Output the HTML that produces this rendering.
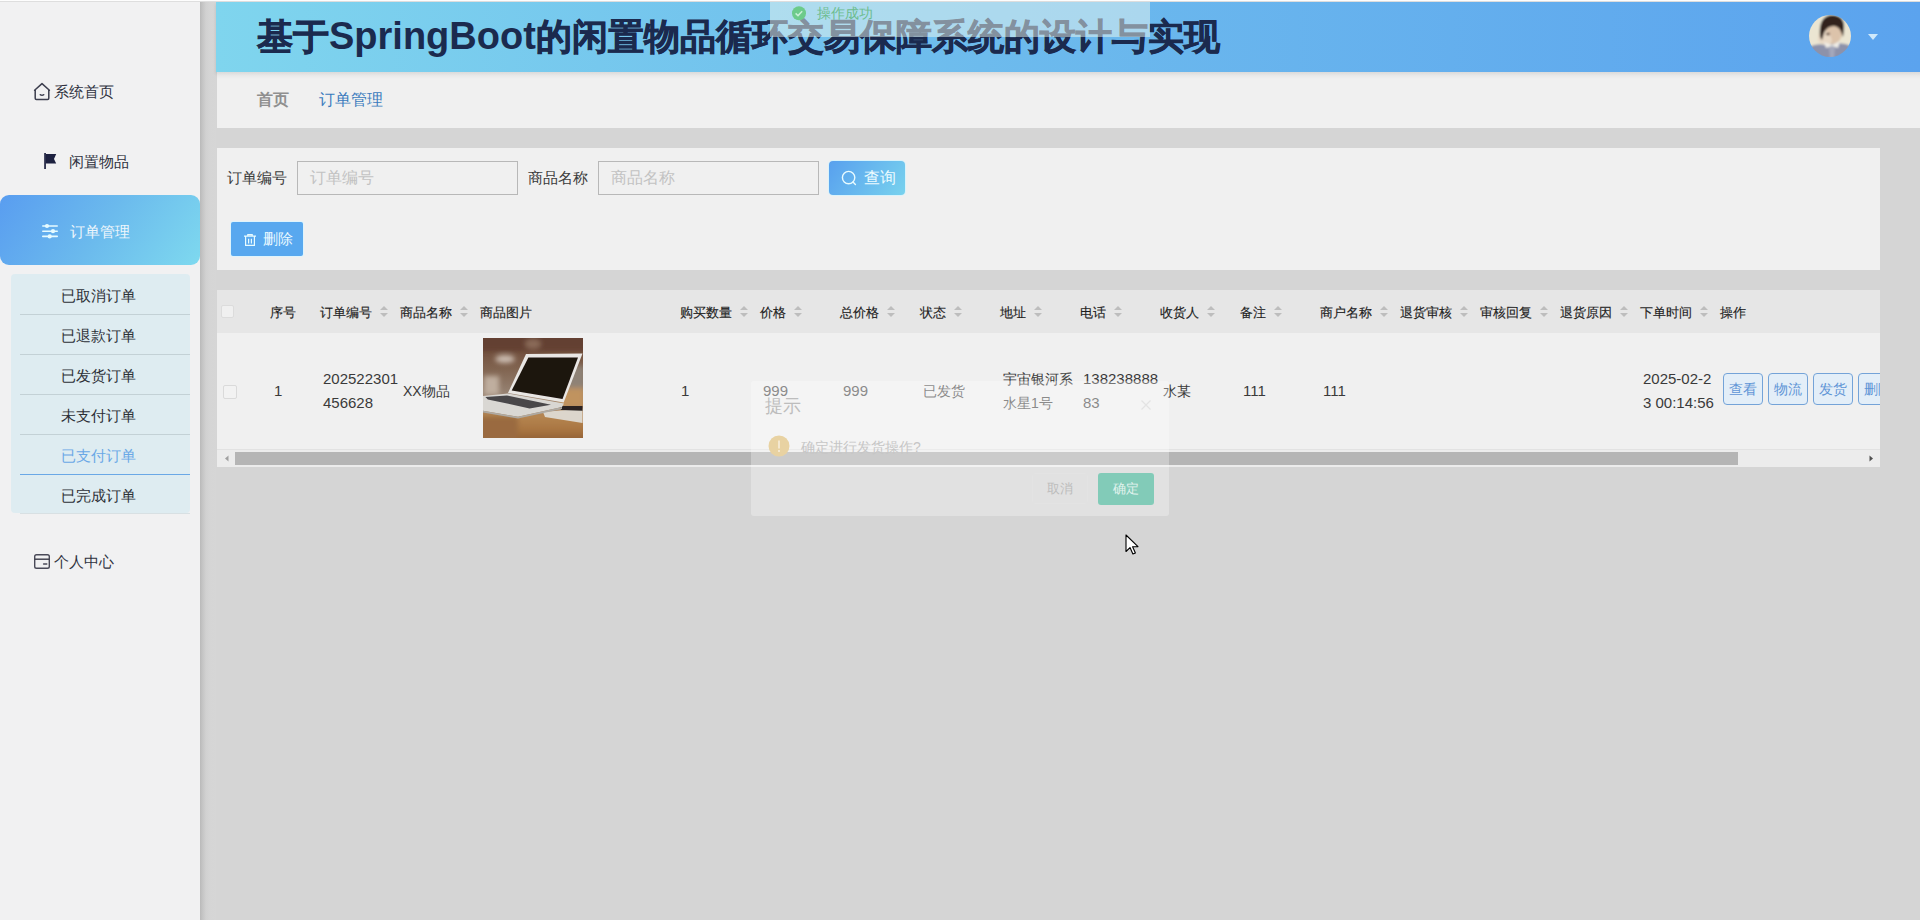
<!DOCTYPE html>
<html><head><meta charset="utf-8">
<style>
*{margin:0;padding:0;box-sizing:border-box}
html,body{width:1920px;height:920px;overflow:hidden}
body{position:relative;background:#d5d5d5;font-family:"Liberation Sans",sans-serif;color:#333}
.abs{position:absolute}
#topline{left:0;top:0;width:1920px;height:2px;background:linear-gradient(#fdfdfd 0,#fdfdfd 1px,#dedede 1px)}
#sidebar{left:0;top:2px;width:200px;height:918px;background:#f1f1f2}
#sbshadow{left:200px;top:2px;width:16px;height:918px;background:linear-gradient(90deg,#b9b9b9 0,#c3c3c3 2px,#d1d1d1 6px,#d5d5d5 10px,#d6d6d6)}
.mi{position:absolute;font-size:15px;color:#2f3140;line-height:20px;white-space:nowrap}
#active{left:0;top:195px;width:200px;height:70px;border-radius:9px;background:linear-gradient(125deg,#599df0 0%,#6bbaed 50%,#7ed9ef 100%)}
#sub{left:11px;top:274px;width:179px;height:239px;background:#deecf1;border-radius:4px}
.sep{position:absolute;left:20px;width:170px;height:1px;background:#c3d1d6}
.si{position:absolute;left:61px;font-size:15px;color:#2c2f36;line-height:20px}
#header{left:216px;top:2px;width:1704px;height:70px;background:linear-gradient(90deg,#7fd5ee 0%,#6dbbed 45%,#5ba3ee 100%);box-shadow:0 2px 3px rgba(0,0,0,.12)}
.tc{-webkit-text-stroke:0.7px #1b2a4e}
#title{left:257px;top:13.5px;font-size:36px;font-weight:bold;color:#1b2a4e;white-space:nowrap;line-height:44px}
#bread{left:217px;top:72px;width:1703px;height:56px;background:#f0f0f0}
#panel{left:217px;top:148px;width:1663px;height:122px;background:#f0f0f0}
#table{left:217px;top:290px;width:1663px;height:177px;background:#f0f0f0}
#thead{left:217px;top:290px;width:1663px;height:43px;background:#e6e6e6}
.th{position:absolute;top:303.5px;font-size:13px;font-weight:normal;-webkit-text-stroke:0.15px #1e1e1e;color:#1e1e1e;line-height:17px;white-space:nowrap}
.td{position:absolute;font-size:14px;color:#3a3a3a;line-height:24px;white-space:nowrap}
.sort{position:absolute;top:305px;width:10px;height:13px}
.btn{position:absolute;top:0;width:40px;height:32px;border:1px solid #74a3d8;border-radius:4px;background:#e3eef8;color:#5f95d6;font-size:14px;line-height:30px;text-align:center}
.num{font-size:15px}
</style></head><body>
<div id="topline" class="abs"></div>
<div id="sidebar" class="abs"></div>
<div id="sbshadow" class="abs"></div>
<div id="header" class="abs"></div>
<div id="title" class="abs"><span class="tc">基于</span><span style="font-size:38px">SpringBoot</span><span class="tc">的闲置物品循环交易保障系统的设计与实现</span></div>
<div id="bread" class="abs"></div>
<div class="abs" style="left:217px;top:72px;width:1703px;height:7px;background:linear-gradient(rgba(0,0,0,0.09),rgba(0,0,0,0.03) 50%,rgba(0,0,0,0))"></div>
<div id="panel" class="abs"></div>
<div id="table" class="abs"></div>
<div id="thead" class="abs"></div>

<!-- sidebar menu -->
<div class="mi" style="left:54px;top:82px">系统首页</div>
<div class="mi" style="left:69px;top:152px">闲置物品</div>
<div id="active" class="abs"></div>
<div class="mi" style="left:70px;top:222px;color:#eef6fc">订单管理</div>
<div id="sub" class="abs"></div>
<div class="si" style="top:286px">已取消订单</div>
<div class="sep" style="top:314px"></div>
<div class="si" style="top:326px">已退款订单</div>
<div class="sep" style="top:354px"></div>
<div class="si" style="top:366px">已发货订单</div>
<div class="sep" style="top:394px"></div>
<div class="si" style="top:406px">未支付订单</div>
<div class="sep" style="top:434px"></div>
<div class="si" style="top:446px;color:#6aa8e6">已支付订单</div>
<div class="sep" style="top:474px;background:#6aa8e6"></div>
<div class="si" style="top:486px">已完成订单</div>
<div class="sep" style="top:513px;background:#d8e0e3"></div>
<div class="mi" style="left:54px;top:552px">个人中心</div>


<!-- sidebar icons -->
<svg class="abs" style="left:30px;top:79px" width="24" height="24" viewBox="0 0 24 24">
 <path d="M4.6 11.2 L12 4.6 L19.4 11.2" fill="none" stroke="#3c3e4e" stroke-width="1.5" stroke-linecap="round" stroke-linejoin="round"/>
 <path d="M5.2 11 V19.2 Q5.2 20.4 6.4 20.4 H17.6 Q18.8 20.4 18.8 19.2 V11" fill="none" stroke="#3c3e4e" stroke-width="1.5"/>
 <path d="M10.2 15.6 Q12 16.9 13.8 15.6" fill="none" stroke="#3c3e4e" stroke-width="1.3" stroke-linecap="round"/>
</svg>
<svg class="abs" style="left:40px;top:150px" width="20" height="22" viewBox="0 0 20 22">
 <rect x="4.2" y="3" width="1.7" height="16" fill="#1d2140"/>
 <path d="M5.8 4 H16.2 L14 9 L16.2 13.6 H5.8 Z" fill="#1d2140"/>
</svg>
<svg class="abs" style="left:40px;top:221px" width="20" height="20" viewBox="0 0 20 20">
 <g stroke="#e6fbff" stroke-width="1.6" stroke-linecap="round" fill="#e6fbff">
 <line x1="2.8" y1="5" x2="17.2" y2="5"/><line x1="2.8" y1="10.2" x2="17.2" y2="10.2"/><line x1="2.8" y1="15.4" x2="17.2" y2="15.4"/>
 <circle cx="7" cy="5" r="1.3"/><circle cx="13" cy="10.2" r="1.3"/><circle cx="9.7" cy="15.4" r="1.3"/>
 </g>
</svg>
<svg class="abs" style="left:30px;top:550px" width="24" height="22" viewBox="0 0 24 22">
 <rect x="4.7" y="4.7" width="14.6" height="13.6" rx="1.8" fill="none" stroke="#4a4a58" stroke-width="1.4"/>
 <line x1="4.7" y1="9.2" x2="19.3" y2="9.2" stroke="#3a3a48" stroke-width="1.4"/>
 <line x1="13.6" y1="14" x2="16.8" y2="14" stroke="#4a4a58" stroke-width="1.4" stroke-linecap="round"/>
</svg>

<!-- header right -->
<svg class="abs" style="left:1809px;top:15px" width="42" height="42" viewBox="0 0 42 42">
 <defs><clipPath id="av"><circle cx="21" cy="21" r="21"/></clipPath>
 <filter id="bl"><feGaussianBlur stdDeviation="1"/></filter></defs>
 <g clip-path="url(#av)"><g filter="url(#bl)">
  <rect x="-2" y="-2" width="46" height="46" fill="#ebe5d2"/>
  <ellipse cx="24" cy="18" rx="9" ry="11" fill="#dcc3aa"/>
  <path d="M9 20 Q13 14 18 16 Q22 20 23 26 L20 30 Q13 30 9 26Z" fill="#e8d8c4"/>
  <path d="M11 22 Q9 1 23 0 Q36 0 35 14 L34 22 Q31 11 25 11 Q18 11 15 18 L13 25Z" fill="#33241d"/><ellipse cx="19" cy="19" rx="2" ry="1.2" fill="#5a4035"/>
  <path d="M0 32 Q8 28 16 30 L24 29 Q34 27 42 31 V44 H0Z" fill="#8d92aa"/>
  <path d="M15 27 L23 30 L31 26 L29 33 L23 31 L17 33Z" fill="#f0ede6"/>
  <path d="M20 32 L26 32 L25 44 H21Z" fill="#a4a7bb"/>
 </g></g>
</svg>
<svg class="abs" style="left:1867px;top:33px" width="12" height="8" viewBox="0 0 12 8"><path d="M1 1 H11 L6 7Z" fill="#cfe9fb"/></svg>

<!-- breadcrumb -->
<div class="abs" style="left:257px;top:89px;font-size:16px;font-weight:bold;color:#8f8f8f;line-height:22px">首页</div>
<div class="abs" style="left:319px;top:89px;font-size:16px;color:#3a7bbd;line-height:22px">订单管理</div>

<!-- search panel -->
<div class="abs" style="left:227px;top:168px;font-size:15px;color:#3a3a3a;line-height:20px">订单编号</div>
<div class="abs" style="left:297px;top:161px;width:221px;height:34px;border:1px solid #b8b8b8;background:#f0f0f0"></div>
<div class="abs" style="left:310px;top:167px;font-size:16px;color:#c2c2c2;line-height:22px">订单编号</div>
<div class="abs" style="left:528px;top:168px;font-size:15px;color:#3a3a3a;line-height:20px">商品名称</div>
<div class="abs" style="left:598px;top:161px;width:221px;height:34px;border:1px solid #b8b8b8;background:#f0f0f0"></div>
<div class="abs" style="left:611px;top:167px;font-size:16px;color:#c2c2c2;line-height:22px">商品名称</div>
<div class="abs" style="left:829px;top:161px;width:76px;height:34px;border-radius:4px;background:linear-gradient(125deg,#58a0ee,#78d2ee);box-shadow:0 0 0 1px #d9f3fb"></div>
<svg class="abs" style="left:840px;top:169px" width="18" height="18" viewBox="0 0 18 18"><circle cx="8.6" cy="8.6" r="6.2" fill="none" stroke="#e8fbff" stroke-width="1.4"/><line x1="13" y1="13" x2="15.4" y2="15.4" stroke="#e8fbff" stroke-width="1.4" stroke-linecap="round"/></svg>
<div class="abs" style="left:864px;top:167px;font-size:16px;color:#ecfbff;line-height:22px">查询</div>
<div class="abs" style="left:231px;top:222px;width:72px;height:34px;border-radius:2px;background:#58a8ef;box-shadow:0 0 0 1px #dff4fc"></div>
<svg class="abs" style="left:242px;top:232px" width="16" height="16" viewBox="0 0 16 16"><path d="M2 4.2 H14 M5.8 4 V2.6 H10.2 V4 M3.6 4.8 V13.4 H12.4 V4.8 M6.6 6.8 V11.6 M9.4 6.8 V11.6" fill="none" stroke="#e8fbff" stroke-width="1.2"/></svg>
<div class="abs" style="left:263px;top:229px;font-size:15px;color:#ecfbff;line-height:20px">删除</div>

<!-- table header -->
<div class="abs" style="left:221px;top:305px;width:13px;height:13px;border:1px solid #dcdcdc;border-radius:2px;background:#f0f0f0"></div>
<div class="th" style="left:270px">序号</div>
<div class="th" style="left:320px">订单编号</div><svg class="sort" style="left:379px" width="10" height="13" viewBox="0 0 10 13"><path d="M5 1 L9 5 H1Z M5 12 L9 8 H1Z" fill="#bdbdbd"/></svg><div class="th" style="left:400px">商品名称</div><svg class="sort" style="left:459px" width="10" height="13" viewBox="0 0 10 13"><path d="M5 1 L9 5 H1Z M5 12 L9 8 H1Z" fill="#bdbdbd"/></svg><div class="th" style="left:480px">商品图片</div><div class="th" style="left:680px">购买数量</div><svg class="sort" style="left:739px" width="10" height="13" viewBox="0 0 10 13"><path d="M5 1 L9 5 H1Z M5 12 L9 8 H1Z" fill="#bdbdbd"/></svg><div class="th" style="left:760px">价格</div><svg class="sort" style="left:793px" width="10" height="13" viewBox="0 0 10 13"><path d="M5 1 L9 5 H1Z M5 12 L9 8 H1Z" fill="#bdbdbd"/></svg><div class="th" style="left:840px">总价格</div><svg class="sort" style="left:886px" width="10" height="13" viewBox="0 0 10 13"><path d="M5 1 L9 5 H1Z M5 12 L9 8 H1Z" fill="#bdbdbd"/></svg><div class="th" style="left:920px">状态</div><svg class="sort" style="left:953px" width="10" height="13" viewBox="0 0 10 13"><path d="M5 1 L9 5 H1Z M5 12 L9 8 H1Z" fill="#bdbdbd"/></svg><div class="th" style="left:1000px">地址</div><svg class="sort" style="left:1033px" width="10" height="13" viewBox="0 0 10 13"><path d="M5 1 L9 5 H1Z M5 12 L9 8 H1Z" fill="#bdbdbd"/></svg><div class="th" style="left:1080px">电话</div><svg class="sort" style="left:1113px" width="10" height="13" viewBox="0 0 10 13"><path d="M5 1 L9 5 H1Z M5 12 L9 8 H1Z" fill="#bdbdbd"/></svg><div class="th" style="left:1160px">收货人</div><svg class="sort" style="left:1206px" width="10" height="13" viewBox="0 0 10 13"><path d="M5 1 L9 5 H1Z M5 12 L9 8 H1Z" fill="#bdbdbd"/></svg><div class="th" style="left:1240px">备注</div><svg class="sort" style="left:1273px" width="10" height="13" viewBox="0 0 10 13"><path d="M5 1 L9 5 H1Z M5 12 L9 8 H1Z" fill="#bdbdbd"/></svg><div class="th" style="left:1320px">商户名称</div><svg class="sort" style="left:1379px" width="10" height="13" viewBox="0 0 10 13"><path d="M5 1 L9 5 H1Z M5 12 L9 8 H1Z" fill="#bdbdbd"/></svg><div class="th" style="left:1400px">退货审核</div><svg class="sort" style="left:1459px" width="10" height="13" viewBox="0 0 10 13"><path d="M5 1 L9 5 H1Z M5 12 L9 8 H1Z" fill="#bdbdbd"/></svg><div class="th" style="left:1480px">审核回复</div><svg class="sort" style="left:1539px" width="10" height="13" viewBox="0 0 10 13"><path d="M5 1 L9 5 H1Z M5 12 L9 8 H1Z" fill="#bdbdbd"/></svg><div class="th" style="left:1560px">退货原因</div><svg class="sort" style="left:1619px" width="10" height="13" viewBox="0 0 10 13"><path d="M5 1 L9 5 H1Z M5 12 L9 8 H1Z" fill="#bdbdbd"/></svg><div class="th" style="left:1640px">下单时间</div><svg class="sort" style="left:1699px" width="10" height="13" viewBox="0 0 10 13"><path d="M5 1 L9 5 H1Z M5 12 L9 8 H1Z" fill="#bdbdbd"/></svg><div class="th" style="left:1720px">操作</div>

<!-- row -->
<div class="abs" style="left:223px;top:385px;width:14px;height:14px;border:1px solid #dadada;border-radius:2px;background:#f2f2f2"></div>
<div class="td num" style="left:274px;top:379px">1</div>
<div class="td num" style="left:323px;top:367px">202522301<br>456628</div>
<div class="td" style="left:403px;top:379px">XX物品</div>
<svg class="abs" style="left:483px;top:338px" width="100" height="100" viewBox="0 0 100 100">
 <defs>
  <linearGradient id="bg1" x1="0" y1="0" x2="0" y2="1"><stop offset="0" stop-color="#684332"/><stop offset=".3" stop-color="#80634f"/><stop offset=".55" stop-color="#968272"/><stop offset=".72" stop-color="#a88462"/><stop offset="1" stop-color="#8a5f3a"/></linearGradient>
  <linearGradient id="tb" x1="0" y1="0" x2="0" y2="1"><stop offset="0" stop-color="#b98a55"/><stop offset=".6" stop-color="#a87440"/><stop offset="1" stop-color="#8a5a32"/></linearGradient>
  <filter id="b2" x="-20%" y="-20%" width="140%" height="140%"><feGaussianBlur stdDeviation="2.5"/></filter>
  <filter id="b1"><feGaussianBlur stdDeviation="0.45"/></filter>
 </defs>
 <rect width="100" height="100" fill="url(#bg1)"/>
 <g filter="url(#b2)">
  <rect x="-5" y="-5" width="110" height="18" fill="#634030"/><ellipse cx="50" cy="6" rx="8" ry="5" fill="#8a6a58"/>
  <ellipse cx="22" cy="21" rx="10" ry="4" fill="#cbbcb0"/>
  <rect x="1" y="38" width="15" height="19" fill="#bfae9f"/>
  <rect x="84" y="28" width="18" height="26" fill="#8e8276"/>
  <rect x="76" y="50" width="26" height="20" fill="#c0935f"/>
  <rect x="-5" y="74" width="110" height="31" fill="url(#tb)"/><rect x="-5" y="78" width="40" height="27" fill="#9a6a40"/>
 </g>
 <g filter="url(#b1)">
  <path d="M60 74 L99.5 70.4 V85 L62 79Z" fill="#dcd6cc"/>
  <path d="M76 68 L99.5 68 V72.7 L78 72Z" fill="#2a2420"/>
  <path d="M43 16 L99.5 15.5 L80.7 64.4 L25 55Z" fill="#e9e7e4"/>
  <path d="M45.4 19.5 L95 19.5 L79.5 61 L28.7 52.4Z" fill="#1f130e"/>
  <path d="M0 58 L25 55.5 L81 65.5 L79 69 L35 78.7 L0 72.8Z" fill="#d9d7d3"/>
  <path d="M2.4 59 L24 57.5 L68 66.8 L46.6 70.4 L4.8 61.4Z" fill="#48464a"/>
  <path d="M0 72.8 L35 78.7 L79 69 L79 71 L35 80.5 L0 74.5Z" fill="#aeaaa4"/>
 </g>
</svg>
<div class="td num" style="left:681px;top:379px">1</div>
<div class="td num" style="color:#585858;left:763px;top:379px">999</div>
<div class="td num" style="color:#585858;left:843px;top:379px">999</div>
<div class="td" style="color:#585858;left:923px;top:379px">已发货</div>
<div class="td" style="left:1003px;top:367px">宇宙银河系<br><span style="color:#585858">水星1号</span></div>
<div class="td num" style="left:1083px;top:367px">138238888<br><span style="color:#585858">83</span></div>
<div class="td" style="left:1163px;top:379px">水某</div>
<div class="td num" style="left:1243px;top:379px">111</div>
<div class="td num" style="left:1323px;top:379px">111</div>
<div class="td num" style="left:1643px;top:367px">2025-02-2<br>3 00:14:56</div>
<div class="abs" style="left:1723px;top:373px;width:157px;height:32px;overflow:hidden">
 <div class="btn" style="left:0">查看</div><div class="btn" style="left:45px">物流</div><div class="btn" style="left:90px">发货</div><div class="btn" style="left:135px">删除</div>
</div>
<!-- scrollbar -->
<div class="abs" style="left:217px;top:449px;width:1663px;height:1px;background:#e2e2e2"></div>
<div class="abs" style="left:217px;top:450px;width:1663px;height:17px;background:#ececec"></div>
<div class="abs" style="left:235px;top:452px;width:1503px;height:13px;background:#b5b5b5"></div>
<svg class="abs" style="left:223px;top:454px" width="8" height="9" viewBox="0 0 8 9"><path d="M2 4.5 L5.5 1.5 V7.5Z" fill="#a0a0a0"/></svg>
<svg class="abs" style="left:1867px;top:454px" width="8" height="9" viewBox="0 0 8 9"><path d="M6 4.5 L2.5 1.5 V7.5Z" fill="#505050"/></svg>

<!-- toast -->
<div class="abs" style="left:770px;top:2px;width:380px;height:34.5px;background:rgba(236,248,240,0.5)"></div>
<svg class="abs" style="left:791px;top:6px" width="16" height="15" viewBox="0 0 16 15"><circle cx="8" cy="7.3" r="7" fill="#6ccb8a"/><path d="M4.6 7.4 L7 9.6 L11.2 5.2" fill="none" stroke="#c8efd6" stroke-width="1.5"/></svg>
<div class="abs" style="left:817px;top:5px;font-size:13.5px;color:#6dbd8e;line-height:18px">操作成功</div>

<!-- modal -->
<div class="abs" style="left:751px;top:381px;width:418px;height:135px;background:rgba(255,255,255,0.3);border-radius:3px"></div>
<div class="abs" style="left:765px;top:394px;font-size:18px;color:#bdbdbd;line-height:24px">提示</div>
<svg class="abs" style="left:1139px;top:398px" width="14" height="14" viewBox="0 0 14 14"><path d="M2.5 2.5 L11.5 11.5 M11.5 2.5 L2.5 11.5" stroke="#e3e3e3" stroke-width="1.2"/></svg>
<svg class="abs" style="left:767px;top:434px" width="24" height="24" viewBox="0 0 24 24"><defs><filter id="ib"><feGaussianBlur stdDeviation="0.7"/></filter></defs><g filter="url(#ib)"><circle cx="12" cy="12" r="10.5" fill="#e8d2a2"/><rect x="11" y="6.5" width="2" height="8" fill="#f4e8d0"/><rect x="11" y="16" width="2" height="2" fill="#f4e8d0"/></g></svg>
<div class="abs" style="left:801px;top:437px;font-size:14px;color:#c6c6c6;line-height:20px">确定进行发货操作?</div>
<div class="abs" style="left:1032px;top:473px;width:56px;height:31px;border:1px solid #e3e3e3;border-radius:3px;font-size:13px;color:#bcbcbc;text-align:center;line-height:29px">取消</div>
<div class="abs" style="left:1098px;top:473px;width:56px;height:32px;background:#82cbb8;border-radius:3px;font-size:13px;color:#e2f3ee;text-align:center;line-height:32px">确定</div>

<!-- cursor -->
<svg class="abs" style="left:1124px;top:533px" width="18" height="24" viewBox="0 0 18 24"><path d="M2 2 V18.5 L6 14.6 L8.9 21 L11.4 19.9 L8.6 13.8 L14 13.6 Z" fill="#fff" stroke="#000" stroke-width="1.1" stroke-linejoin="round"/></svg>
</body></html>
